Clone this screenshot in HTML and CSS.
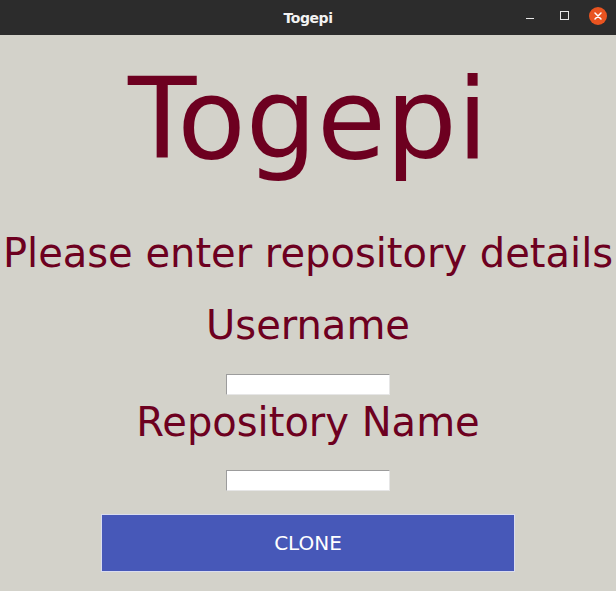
FILE: index.html
```html
<!DOCTYPE html>
<html>
<head>
<meta charset="utf-8">
<link rel="stylesheet" href="styles.css">
</head>
<body>
<div class="window">
  <header class="titlebar">
    <span class="title">Togepi</span>
    <div class="controls">
      <span class="minimize"></span>
      <span class="maximize"></span>
      <span class="close">
        <svg width="18" height="18" viewBox="0 0 18 18"><circle cx="9" cy="9" r="9" fill="#e95420"/><path d="M6 6 L12 12 M12 6 L6 12" stroke="#fff" stroke-width="1.5" stroke-linecap="round"/></svg>
      </span>
    </div>
  </header>
  <main class="app">
    <h1 class="logo">Togepi</h1>
    <p class="prompt">Please enter repository details</p>
    <label class="field-label" for="user">Username</label>
    <input class="field" id="user" type="text">
    <label class="field-label repo" for="repo">Repository Name</label>
    <input class="field field-repo" id="repo" type="text">
    <button class="clone">CLONE</button>
  </main>
</div>
</body>
</html>
```
FILE: styles.css
```css
html, body {
  margin: 0;
  padding: 0;
}
body {
  width: 616px;
  height: 591px;
  overflow: hidden;
  background: #d3d2ca;
  font-family: "DejaVu Sans", sans-serif;
}
.window {
  display: flex;
  flex-direction: column;
  height: 591px;
}
.titlebar {
  position: relative;
  height: 35px;
  background: #2c2c2c;
  display: flex;
  align-items: center;
  justify-content: center;
  flex-shrink: 0;
}
.title {
  color: #f2f2f2;
  font-weight: bold;
  font-size: 14px;
  letter-spacing: -0.4px;
  padding-top: 1px;
}
.controls {
  position: absolute;
  right: 9px;
  top: 7px;
  display: flex;
  align-items: center;
  height: 18px;
}
.minimize {
  width: 8px;
  height: 1px;
  background: #e8e8e8;
  margin-top: 4px;
  margin-right: 26px;
}
.maximize {
  width: 7px;
  height: 7px;
  border: 1px solid #e8e8e8;
  margin-top: -2px;
  margin-right: 20px;
}
.close {
  width: 18px;
  height: 18px;
  display: block;
}
.close svg { display: block; }
.app {
  display: flex;
  flex-direction: column;
  align-items: center;
  color: #6d0020;
}
.logo {
  margin: 19px 0 0;
  font-weight: normal;
  font-size: 112px;
  line-height: 130px;
  white-space: nowrap;
}
.prompt {
  margin: 46px 0 0;
  font-size: 40px;
  line-height: 46px;
  white-space: nowrap;
}
.field-label {
  margin-top: 26px;
  font-size: 40px;
  line-height: 46px;
  white-space: nowrap;
}
.field-label.repo {
  margin-top: 4px;
}
.field {
  box-sizing: border-box;
  width: 164px;
  height: 21px;
  margin: 26px 0 0;
  padding: 0 2px;
  background: #ffffff;
  border: 1px solid;
  border-color: #9c9c9c #e6e6e6 #e6e6e6 #9c9c9c;
  font-family: "DejaVu Sans", sans-serif;
  font-size: 13px;
  outline: none;
}
.field-repo {
  margin-top: 25px;
}
.clone {
  box-sizing: border-box;
  width: 414px;
  height: 58px;
  margin-top: 23px;
  background: #4758b8;
  border: 1px solid #d9dcef;
  color: #ffffff;
  font-family: "DejaVu Sans", sans-serif;
  font-size: 20px;
  padding: 0;
}
```
